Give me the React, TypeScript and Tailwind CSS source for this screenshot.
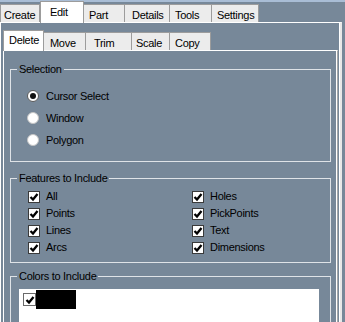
import React from 'react';

const outerTabs = [
  { label: 'Create', w: 'w-[40px]', pl: 'pl-[3px]' },
  { label: 'Edit', w: 'w-[44px]', pl: 'pl-[9px]', active: true },
  { label: 'Part', w: 'w-[41px]', pl: 'pl-[5px]' },
  { label: 'Details', w: 'w-[45px]', pl: 'pl-[7px]' },
  { label: 'Tools', w: 'w-[42px]', pl: 'pl-[5px]' },
  { label: 'Settings', w: 'w-[47px]', pl: 'pl-[5px]' },
];

const innerTabs = [
  { label: 'Delete', w: 'w-[41px]', pl: 'pl-[5px]', active: true },
  { label: 'Move', w: 'w-[42px]', pl: 'pl-[6px]' },
  { label: 'Trim', w: 'w-[46px]', pl: 'pl-[8px]' },
  { label: 'Scale', w: 'w-[38px]', pl: 'pl-[4px]' },
  { label: 'Copy', w: 'w-[41px]', pl: 'pl-[5px]' },
];

const features = [
  ['All', 'Holes'],
  ['Points', 'PickPoints'],
  ['Lines', 'Text'],
  ['Arcs', 'Dimensions'],
];

type Tab = { label: string; w: string; pl: string; active?: boolean };

const TabButton: React.FC<{ tab: Tab; first?: boolean; inner?: boolean }> = ({ tab, first, inner }) => {
  if (tab.active) {
    return (
      <div
        className={`relative z-10 -mb-px ${inner ? 'h-[21px] pt-[3px]' : 'h-[22px] pt-[4px]'} ${tab.w} ${tab.pl} bg-white border-l border-t border-r border-[#9c9c9c] leading-[13px]`}
      >
        {tab.label}
      </div>
    );
  }
  return (
    <div
      className={`h-[18px] ${tab.w} ${tab.pl} pt-[2px] leading-[16px] bg-[#ececec] border-t border-r ${first ? 'border-l' : ''} border-[#9c9c9c]`}
    >
      {tab.label}
    </div>
  );
};

const Check: React.FC<{ size?: string; border?: string }> = ({ size = 'w-[12px] h-[12px]', border = 'border-[#3a3a3a]' }) => (
  <div className={`${size} shrink-0 border ${border} bg-white flex items-center justify-center`}>
    <svg width="10" height="10" viewBox="0 0 10 10">
      <polyline points="1.5,5 4,7.5 8.5,2" fill="none" stroke="#000" strokeWidth="2.3" />
    </svg>
  </div>
);

const Radio: React.FC<{ checked?: boolean; label: string }> = ({ checked, label }) => (
  <div className="flex items-center h-[22px] pl-[16px] gap-[7px]">
    <div
      className={`w-[12px] h-[12px] rounded-full bg-white border flex items-center justify-center ${checked ? 'border-[#5a5a5a]' : 'border-[#c4c4c4]'}`}
    >
      {checked && <div className="w-[6px] h-[6px] rounded-full bg-[#111]" />}
    </div>
    <span>{label}</span>
  </div>
);

const Group: React.FC<{ title: string; className?: string; children: React.ReactNode }> = ({ title, className, children }) => (
  <fieldset className={`ml-[6px] w-[321px] border border-[#dfe3e7] ${className ?? ''}`}>
    <legend className="ml-[6px] px-[2px] leading-[13px]">{title}</legend>
    {children}
  </fieldset>
);

export default function App() {
  return (
    <div className="w-[345px] h-[322px] overflow-hidden bg-[#778899] text-black text-[11px] tracking-[-0.3px] font-['Liberation_Sans',Arial,sans-serif]">
      {/* top tab strip */}
      <div className="flex items-end h-[22px] shadow-[inset_0_2px_0_#a9bdd5]">
        {outerTabs.map((t, i) => (
          <TabButton key={t.label} tab={t} first={i === 0} />
        ))}
      </div>

      {/* outer page */}
      <div className="w-[342px] h-[300px] border-l border-t border-white border-r-2 border-r-[#e8e8e8] shadow-[inset_-1px_0_0_#ffffff]">
        <div className="flex items-end h-[27px] pl-[2px]">
          {innerTabs.map((t, i) => (
            <TabButton key={t.label} tab={t} first={i === 0} inner />
          ))}
        </div>

        {/* inner page */}
        <div className="ml-[2px] w-[335px] h-[280px] border-l border-t border-white border-r border-r-[#a8a8a8] shadow-[inset_-1px_0_0_#ffffff]">
          <Group title="Selection" className="mt-[12px] pt-[9px] pb-[10px]">
            <Radio checked label="Cursor Select" />
            <Radio label="Window" />
            <Radio label="Polygon" />
          </Group>

          <Group title="Features to Include" className="mt-[10px] pt-[3px] pb-[6px]">
            <div className="grid grid-cols-[164px_1fr] pl-[17px]">
              {features.map(([a, b]) => (
                <React.Fragment key={a}>
                  <div className="flex items-center h-[17px] gap-[6px]">
                    <Check />
                    <span>{a}</span>
                  </div>
                  <div className="flex items-center h-[17px] gap-[6px]">
                    <Check />
                    <span>{b}</span>
                  </div>
                </React.Fragment>
              ))}
            </div>
          </Group>

          <Group title="Colors to Include" className="mt-[7px] pt-[6px] h-[80px]">
            <div className="ml-[8px] w-[300px] h-[60px] bg-white pt-px pl-[4px]">
              <div className="flex items-center">
                <Check size="w-[13px] h-[13px]" border="border-[#6a6a6a]" />
                <div className="w-[40px] h-[19px] bg-black" />
              </div>
            </div>
          </Group>
        </div>
      </div>
    </div>
  );
}
